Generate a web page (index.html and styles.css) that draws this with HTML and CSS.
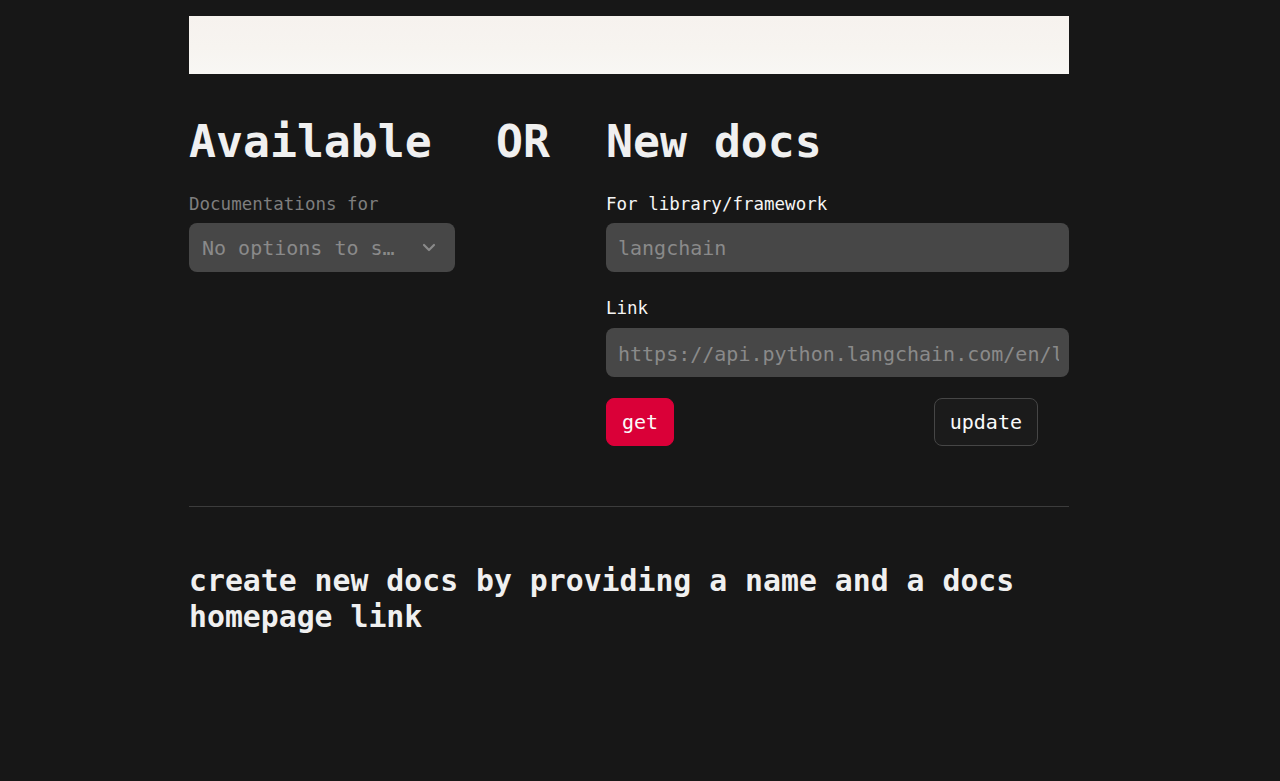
FILE: index.html
```html
<!DOCTYPE html>
<html lang="en">
<head>
<meta charset="utf-8">
<title>Docs</title>
<link rel="stylesheet" href="styles.css">
</head>
<body>
<main class="page">
  <div class="banner"></div>

  <div class="columns">
    <section class="col col-left">
      <h2 class="title">Available</h2>
      <div class="label label-first label-muted">Documentations for</div>
      <div class="select">
        <span class="select-text">No options to s…</span>
        <svg class="chevron" width="14" height="9" viewBox="0 0 14 9" aria-hidden="true">
          <polyline points="2,2 7,7 12,2" fill="none" stroke="#8a8a8a" stroke-width="2.2" stroke-linecap="round" stroke-linejoin="round"/>
        </svg>
      </div>
    </section>

    <section class="col col-mid">
      <h2 class="title">OR</h2>
    </section>

    <section class="col col-right">
      <h2 class="title">New docs</h2>
      <div class="label label-first">For library/framework</div>
      <div class="input"><span class="placeholder">langchain</span></div>
      <div class="label label-gap">Link</div>
      <div class="input"><span class="placeholder">https://api.python.langchain.com/en/latest</span></div>
      <div class="actions">
        <button class="btn btn-primary">get</button>
        <button class="btn btn-secondary">update</button>
      </div>
    </section>
  </div>

  <hr class="divider">

  <h3 class="subtitle">create new docs by providing a name and a docs homepage link</h3>
</main>
</body>
</html>
```

FILE: styles.css
```css
* { box-sizing: border-box; }

html, body {
  margin: 0;
  padding: 0;
  background: #171717;
}

body {
  font-family: "DejaVu Sans Mono", "Liberation Mono", monospace;
  color: #f0f0f0;
}

.page {
  width: 880px;
  margin-left: 189px;
  padding-top: 16px;
}

.banner {
  height: 58px;
  background: linear-gradient(180deg, #f6f2ee 0%, #f7f4f0 55%, #f8f7f4 100%);
}

.columns {
  display: flex;
  gap: 16px;
  margin-top: 41px;
}

.col-left { width: 266px; }
.col-mid { width: 119px; padding-left: 25px; }
.col-right { width: 463px; }

.title {
  margin: 0;
  font-size: 44.8px;
  line-height: 54px;
  font-weight: 700;
  color: #f0f0f0;
  white-space: nowrap;
}

.label {
  font-size: 17.5px;
  line-height: 24.5px;
  height: 24.5px;
  color: #f5f5f5;
  white-space: nowrap;
}

.label-first {
  margin-top: 23px;
  margin-bottom: 6px;
}

.label-gap {
  margin-top: 24px;
  margin-bottom: 8px;
}

.label-muted { color: #7e7e7e; }

.select,
.input {
  height: 49px;
  border-radius: 8px;
  background: #474747;
  display: flex;
  align-items: center;
  padding-top: 2px;
}

.select {
  padding-left: 13px;
  padding-right: 19px;
  justify-content: space-between;
}

.select-text {
  font-size: 20px;
  color: #8a8a8a;
  white-space: nowrap;
}

.chevron { flex: none; margin-top: -2px; }

.input {
  padding-left: 12px;
  padding-right: 10px;
}

.placeholder {
  display: block;
  min-width: 0;
  overflow: hidden;
  font-size: 20px;
  color: #8a8a8a;
  white-space: nowrap;
}

.actions {
  display: flex;
  margin-top: 21px;
}

.btn {
  height: 48px;
  padding: 0 15px;
  border-radius: 8px;
  font-family: inherit;
  font-size: 20px;
  color: #fafafa;
  cursor: pointer;
}

.btn-primary {
  background: #da0038;
  border: 1px solid #da0038;
}

.btn-secondary {
  margin-left: auto;
  margin-right: 31px;
  background: #1b1b1b;
  border: 1px solid #464646;
}

.divider {
  margin: 60px 0 0;
  border: 0;
  border-top: 1px solid #3c3c3c;
  height: 0;
}

.subtitle {
  margin: 56px 0 0;
  font-size: 29.8px;
  line-height: 36px;
  font-weight: 700;
  color: #f0f0f0;
}
```
